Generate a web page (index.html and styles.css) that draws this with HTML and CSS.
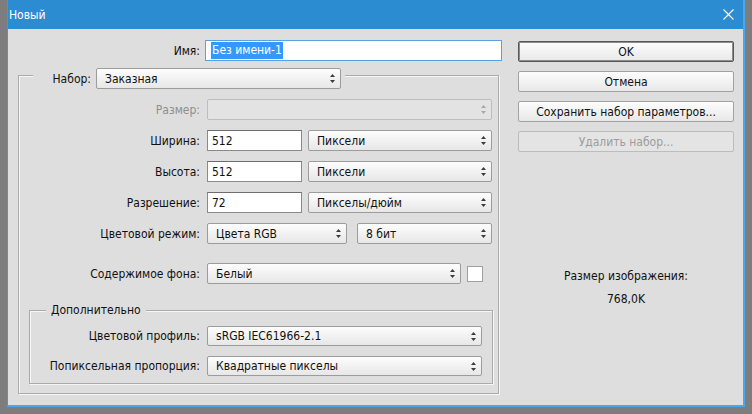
FILE: index.html
```html
<!DOCTYPE html>
<html lang="ru">
<head>
<meta charset="utf-8">
<title>Новый</title>
<link rel="stylesheet" href="styles.css">
</head>
<body>
<div class="window">
  <div class="titlebar">
    <span class="title">Новый</span>
    <svg class="close" width="11" height="11" viewBox="0 0 11 11"><path d="M0.5 0.5L10.5 10.5M10.5 0.5L0.5 10.5" stroke="#fff" stroke-width="1.1" fill="none"/></svg>
  </div>
  <div class="content">
    <div class="left">
      <div class="name-row">
        <span class="lbl name-lbl">Имя:</span>
        <div class="input name-input"><span class="hl">Без имени-1</span></div>
      </div>

      <div class="group outer">
        <div class="group-head">
          <span class="head-lbl">Набор:</span>
          <div class="select w-preset"><span>Заказная</span><svg class="arr" width="5" height="9" viewBox="0 0 5 9"><path d="M2.5 0L5 3H0zM0 6H5L2.5 9z"/></svg></div>
        </div>

        <div class="grow r-first">
          <span class="lbl olbl disabled">Размер:</span>
          <div class="select disabled w-size"><span></span><svg class="arr" width="5" height="9" viewBox="0 0 5 9"><path d="M2.5 0L5 3H0zM0 6H5L2.5 9z"/></svg></div>
        </div>
        <div class="grow">
          <span class="lbl olbl">Ширина:</span>
          <div class="input w-num">512</div>
          <div class="select w-unit"><span>Пиксели</span><svg class="arr" width="5" height="9" viewBox="0 0 5 9"><path d="M2.5 0L5 3H0zM0 6H5L2.5 9z"/></svg></div>
        </div>
        <div class="grow">
          <span class="lbl olbl">Высота:</span>
          <div class="input w-num">512</div>
          <div class="select w-unit"><span>Пиксели</span><svg class="arr" width="5" height="9" viewBox="0 0 5 9"><path d="M2.5 0L5 3H0zM0 6H5L2.5 9z"/></svg></div>
        </div>
        <div class="grow">
          <span class="lbl olbl">Разрешение:</span>
          <div class="input w-num">72</div>
          <div class="select w-unit"><span>Пикселы/дюйм</span><svg class="arr" width="5" height="9" viewBox="0 0 5 9"><path d="M2.5 0L5 3H0zM0 6H5L2.5 9z"/></svg></div>
        </div>
        <div class="grow">
          <span class="lbl olbl">Цветовой режим:</span>
          <div class="select w-mode"><span>Цвета RGB</span><svg class="arr" width="5" height="9" viewBox="0 0 5 9"><path d="M2.5 0L5 3H0zM0 6H5L2.5 9z"/></svg></div>
          <div class="select w-bits"><span>8 бит</span><svg class="arr" width="5" height="9" viewBox="0 0 5 9"><path d="M2.5 0L5 3H0zM0 6H5L2.5 9z"/></svg></div>
        </div>
        <div class="grow r-bg">
          <span class="lbl olbl">Содержимое фона:</span>
          <div class="select w-bg"><span>Белый</span><svg class="arr" width="5" height="9" viewBox="0 0 5 9"><path d="M2.5 0L5 3H0zM0 6H5L2.5 9z"/></svg></div>
          <div class="swatch"></div>
        </div>

        <div class="group inner">
          <div class="inner-title">Дополнительно</div>
          <div class="irow r-ifirst">
            <span class="lbl ilbl">Цветовой профиль:</span>
            <div class="select w-prof"><span>sRGB IEC61966-2.1</span><svg class="arr" width="5" height="9" viewBox="0 0 5 9"><path d="M2.5 0L5 3H0zM0 6H5L2.5 9z"/></svg></div>
          </div>
          <div class="irow">
            <span class="lbl ilbl">Попиксельная пропорция:</span>
            <div class="select w-prof"><span>Квадратные пикселы</span><svg class="arr" width="5" height="9" viewBox="0 0 5 9"><path d="M2.5 0L5 3H0zM0 6H5L2.5 9z"/></svg></div>
          </div>
        </div>
      </div>
    </div>

    <div class="right">
      <div class="btn btn-default">OK</div>
      <div class="btn">Отмена</div>
      <div class="btn">Сохранить набор параметров...</div>
      <div class="btn btn-disabled">Удалить набор...</div>
      <div class="info">
        <div>Размер изображения:</div>
        <div>768,0K</div>
      </div>
    </div>
  </div>
</div>
</body>
</html>
```

FILE: styles.css
```css
* { box-sizing: border-box; }
html, body { margin: 0; padding: 0; }
body {
  width: 752px;
  height: 414px;
  overflow: hidden;
  background: #7d7d7d;
  font-family: "DejaVu Sans Condensed", "DejaVu Sans", sans-serif;
  font-stretch: condensed;
  font-size: 12px;
  color: #111;
}
.window {
  margin-left: 7px;
  width: 738px;
  height: 407px;
  background: #dedede;
  border-left: 1px solid #3f9be0;
  border-right: 2px solid #4ea6e9;
  border-bottom: 2px solid #4ea6e9;
  display: flex;
  flex-direction: column;
}
.titlebar {
  height: 29px;
  flex: none;
  background: #2b8cd2;
  display: flex;
  align-items: center;
  justify-content: space-between;
  padding: 0 9px 0 1px;
  color: #fff;
}
.title { font-size: 12px; line-height: 14px; }
.close { display: block; }

.content {
  display: flex;
  gap: 16px;
  padding: 11px 9px 0 10px;
}
.left { width: 484px; flex: none; }
.right { width: 216px; flex: none; padding-top: 1px; display: flex; flex-direction: column; gap: 9px; }

.lbl { text-align: right; white-space: nowrap; flex: none; }
.disabled { color: #8e8e8e; }

.name-row { display: flex; align-items: center; height: 21px; }
.name-lbl { width: 182px; margin-right: 5px; }
.input {
  height: 21px;
  background: #fff;
  border: 1px solid #8a8a8a;
  border-top-color: #6e6e6e;
  padding: 0 4px;
  display: flex;
  align-items: center;
  flex: none;
}
.name-input { width: 297px; border-color: #5aa0e2; padding-left: 5px; }
.hl { background: #3399ff; color: #fff; line-height: 17px; padding: 0 1px; }

.group {
  border: 1px solid #ababab;
  box-shadow: 1px 1px 0 #f6f6f6, inset 1px 1px 0 #f6f6f6;
}
.outer { width: 481px; margin-top: 14px; padding-bottom: 9px; }
.group-head {
  display: flex;
  align-items: center;
  width: fit-content;
  margin: -8px 0 0 14px;
  padding-right: 4px;
  background: #dedede;
  height: 21px;
}
.head-lbl { width: 58px; text-align: right; margin-right: 5px; }

.select {
  height: 21px;
  flex: none;
  display: flex;
  align-items: center;
  justify-content: space-between;
  padding: 0 5px 0 8px;
  border: 1px solid #9c9c9c;
  border-radius: 2px;
  background: linear-gradient(#fdfdfd, #e7e7e7);
  white-space: nowrap;
}
.select .arr { fill: #3c3c3c; flex: none; }
.select.disabled { background: #e3e3e3; border-color: #bdbdbd; }
.select.disabled .arr { fill: #a9a9a9; }

.w-preset { width: 245px; }
.w-size { width: 285px; }
.w-num { width: 95px; }
.w-unit { width: 184px; margin-left: 6px; }
.w-mode { width: 140px; }
.w-bits { width: 135px; margin-left: 10px; }
.w-bg { width: 254px; }
.w-prof { width: 275px; height: 20px; }

.grow { display: flex; align-items: center; height: 21px; margin-top: 10px; }
.r-bg { margin-top: 19px; }
.olbl { width: 181px; margin-right: 7px; }

.swatch {
  width: 16px;
  height: 16px;
  margin-left: 6px;
  background: #fff;
  border: 1px solid #a0a0a0;
  flex: none;
}

.inner { width: 464px; margin: 26px 0 0 10px; padding-bottom: 7px; }
.inner-title {
  width: fit-content;
  margin: -8px 0 0 16px;
  padding: 0 5px;
  line-height: 15px;
  background: #dedede;
}
.irow { display: flex; align-items: center; height: 20px; margin-top: 10px; }
.r-ifirst { margin-top: 8px; }
.ilbl { width: 170px; margin-right: 7px; }

.btn {
  height: 21px;
  display: flex;
  align-items: center;
  justify-content: center;
  border: 1px solid #a2a2a2;
  border-radius: 2px;
  background: linear-gradient(#fdfdfd, #e8e8e8);
  white-space: nowrap;
}
.btn-default { border-color: #585858; box-shadow: inset 0 0 0 1px #8c8c8c; }
.btn-disabled { color: #9c9c9c; border-color: #bcbcbc; background: #e4e4e4; }

.info { margin-top: 104px; text-align: center; line-height: 23px; }
```
